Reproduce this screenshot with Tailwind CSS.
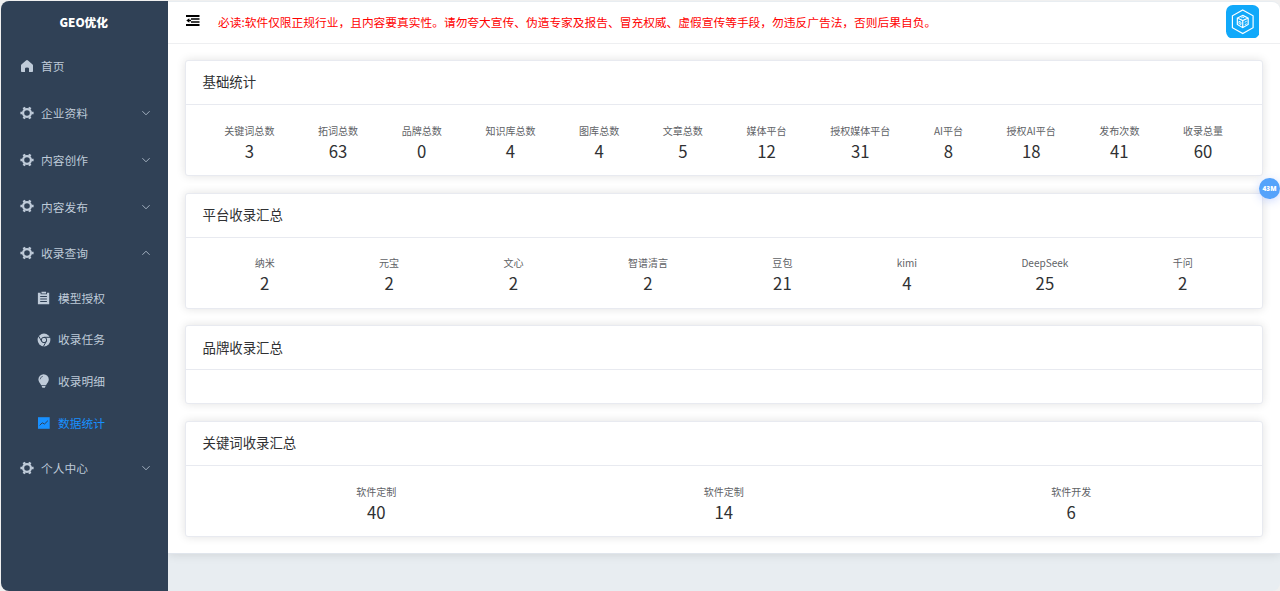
<!DOCTYPE html>
<html lang="zh-CN">
<head>
<meta charset="UTF-8" />
<meta name="viewport" content="width=device-width, initial-scale=1" />
<title>GEO优化</title>
<script src="https://cdn.jsdelivr.net/npm/@tailwindcss/browser@4"></script>
</head>
<body class="bg-[#f0f0f0] h-[591px] overflow-hidden font-['Noto_Sans_CJK_SC',sans-serif]">
  <!-- Shared icons -->
  <svg class="hidden">
    <symbol id="gear" viewBox="0 0 14 14">
      <circle cx="7" cy="7" r="3.9" fill="none" stroke="currentColor" stroke-width="2.2"/>
      <path fill="none" stroke="currentColor" stroke-width="2.6" d="M2.6 7H.4M11.4 7H13.6M4.7 3 3.7 1.3M9.3 3 10.3 1.3M4.7 11 3.7 12.7M9.3 11 10.3 12.7"/>
    </symbol>
    <symbol id="down" viewBox="0 0 10 10">
      <path fill="none" stroke="currentColor" stroke-width=".8" d="M1.4 3.2 5 6.8 8.6 3.2"/>
    </symbol>
  </svg>

  <div class="h-full pt-px pl-px flex">
    <!-- Sidebar -->
    <aside class="relative z-10 w-[166.5px] shrink-0 rounded-l-lg bg-[#304156] text-[#bfcbd9] text-[11.72px]">
      <h1 class="h-[41.5px] pr-px flex items-center justify-center text-white font-black">GEO优化</h1>
      <nav>
        <a class="h-[46.87px] pl-[19px] pr-[17px] flex items-center">
          <svg class="w-[14px] h-[14px] mr-[7px]" viewBox="0 0 14 14"><path fill="currentColor" d="M7 1Q7.5 1 8 1.5L12.6 5.6Q13 6 13 6.5V12.2Q13 13 12.2 13H9V9.6Q9 8.600 7 8.600T5 9.600V13H1.800Q1 13 1 12.200V6.500Q1 6 1.400 5.600L6 1.500Q6.500 1 7 1Z"/></svg>
          <span class="pb-px">首页</span>
        </a>
        <a class="h-[46.87px] pl-[19px] pr-[17px] flex items-center">
          <svg class="w-[14px] h-[14px] mr-[7px]"><use href="#gear"/></svg>
          <span class="pb-px">企业资料</span>
          <svg class="w-[10px] h-[10px] ml-auto"><use href="#down"/></svg>
        </a>
        <a class="h-[46.87px] pl-[19px] pr-[17px] flex items-center">
          <svg class="w-[14px] h-[14px] mr-[7px]"><use href="#gear"/></svg>
          <span>内容创作</span>
          <svg class="w-[10px] h-[10px] ml-auto"><use href="#down"/></svg>
        </a>
        <a class="h-[46.87px] pl-[19px] pr-[17px] flex items-center">
          <svg class="w-[14px] h-[14px] mr-[7px] mb-px"><use href="#gear"/></svg>
          <span>内容发布</span>
          <svg class="w-[10px] h-[10px] ml-auto"><use href="#down"/></svg>
        </a>
        <a class="h-[46.87px] pl-[19px] pr-[17px] flex items-center">
          <svg class="w-[14px] h-[14px] mr-[7px]"><use href="#gear"/></svg>
          <span class="pb-px">收录查询</span>
          <svg class="w-[10px] h-[10px] ml-auto rotate-180"><use href="#down"/></svg>
        </a>
        <a class="h-[41.85px] pl-[35.5px] flex items-center">
          <svg class="w-[14px] h-[14px] mr-[7.5px]" viewBox="0 0 14 14"><path fill="currentColor" fill-rule="evenodd" d="M.9 1.700H3.600V3.300H10V1.700H12.200V13.300H.9ZM4.500 .8H9.100V2.500H4.500ZM3.200 4.900V6H9.900V4.900ZM3.200 7.400V8.500H9.900V7.400ZM3.200 9.900V11H9.900V9.900Z"/></svg>
          <span>模型授权</span>
        </a>
        <a class="h-[41.85px] pl-[35.5px] flex items-center">
          <svg class="w-[14px] h-[14px] mr-[7.5px]" viewBox="0 0 14 14">
            <circle cx="7" cy="7" r="6.4" fill="currentColor"/>
            <circle cx="7" cy="7" r="2.7" fill="none" stroke="#304156" stroke-width="1"/>
            <path fill="none" stroke="#304156" stroke-width="1" d="M7 4.3H13M4.7 8.4 1.7 3.2M9.3 8.4 6.3 13.6"/>
          </svg>
          <span class="pb-px">收录任务</span>
        </a>
        <a class="h-[41.85px] pl-[35.5px] flex items-center">
          <svg class="w-[14px] h-[14px] mr-[7.5px]" viewBox="0 0 14 14">
            <path fill="currentColor" d="M6.600 .3a5.200 5.200 0 0 1 5.200 5.200C11.800 7.800 10 9 9 11.300H4.200C3.200 9 1.400 7.800 1.400 5.500A5.200 5.200 0 0 1 6.600 .3ZM4.600 12H8.600L7.800 13.700H5.400Z"/>
            <path fill="none" stroke="#304156" stroke-width=".7" d="M3.200 5.300A3.300 3.300 0 0 1 5.800 2.300"/>
          </svg>
          <span class="pb-px">收录明细</span>
        </a>
        <a class="h-[41.85px] pl-[35.5px] flex items-center text-[#1890ff]">
          <svg class="w-[14px] h-[14px] mr-[7.5px]" viewBox="0 0 14 14">
            <path fill="currentColor" d="M1 1.200H12.700V12.800H1Z"/>
            <path fill="none" stroke="#304156" stroke-width="1" d="M2.600 9.400 5.200 6.800 7.500 8 10.900 4.700"/>
          </svg>
          <span>数据统计</span>
        </a>
        <a class="h-[46.87px] pl-[19px] pr-[17px] flex items-center">
          <svg class="w-[14px] h-[14px] mr-[7px]"><use href="#gear"/></svg>
          <span>个人中心</span>
          <svg class="w-[10px] h-[10px] ml-auto"><use href="#down"/></svg>
        </a>
      </nav>
    </aside>

    <div class="flex-1 min-w-0 flex flex-col bg-[#e8edf1] rounded-r-lg">
      <!-- Top bar -->
      <header class="relative z-10 mt-px h-[42px] shrink-0 bg-white border-b border-[#eeeff1] rounded-tr-lg pl-[18.5px] pr-[21px] flex items-center">
        <svg class="w-[14px] h-[13px] mb-[4px] text-black" viewBox="0 0 14 13"><path fill="currentColor" d="M0 1H13.5V3H0ZM5 4.2H13.5V5.8H5ZM5 7.2H13.5V8.8H5ZM0 10H13.5V12H0ZM.3 6.500 3.300 4.300V5.800H5V7.200H3.300V8.700Z"/></svg>
        <p class="ml-[18px] mb-px text-[11.72px] text-[#ff0000] whitespace-nowrap">必读:软件仅限正规行业，且内容要真实性。请勿夸大宣传、伪造专家及报告、冒充权威、虚假宣传等手段，勿违反广告法，否则后果自负。</p>
        <svg class="w-[33.5px] h-[33.5px] ml-auto mb-[2px]" viewBox="0 0 34 34">
          <rect width="34" height="34" rx="7" fill="#11a9fa"/>
          <g fill="none" stroke="#fff" stroke-width="1.2">
            <path d="M17 5 27.5 11V23L17 29 6.5 23V11Z"/>
            <path d="M17 10.5 22.5 13.2V19.8L17 23 11.5 19.8V13.2ZM11.5 13.2 17 15.8 22.5 13.2M17 15.8V23"/>
            <path stroke-width=".9" d="M13.2 16.5V18.8L15.2 19.8V17.5ZM19 17.5 21 16.5M19 20 21 19M15.5 13 17 12.3 18.5 13"/>
          </g>
        </svg>
      </header>

      <!-- Statistics -->
      <main class="bg-white border-b border-[#e0e5ec] shadow-[0_0_10px_rgba(0,0,0,0.12)] h-[510px] px-[17px] pt-[16px] flex flex-col gap-[16.6px] text-[#303133]">
        <section class="h-[116px] shrink-0 bg-white border border-[#e8eaf0] rounded-[3px] shadow-[0_0_10px_rgba(0,0,0,0.12)]">
          <h2 class="h-[44px] px-[17px] pb-[2px] flex items-center border-b border-[#e8eaf0] text-[13.4px]">基础统计</h2>
          <div class="px-[17px] pt-[17px] flex justify-around text-center" data-row="base"></div>
        </section>
        <section class="h-[116px] shrink-0 bg-white border border-[#e8eaf0] rounded-[3px] shadow-[0_0_10px_rgba(0,0,0,0.12)]">
          <h2 class="h-[44px] px-[17px] pb-[2px] flex items-center border-b border-[#e8eaf0] text-[13.4px]">平台收录汇总</h2>
          <div class="px-[17px] pt-[16.8px] flex justify-around text-center" data-row="platform"></div>
        </section>
        <section class="h-[79px] shrink-0 bg-white border border-[#e8eaf0] rounded-[3px] shadow-[0_0_10px_rgba(0,0,0,0.12)]">
          <h2 class="h-[44px] px-[17px] pb-px flex items-center border-b border-[#e8eaf0] text-[13.4px]">品牌收录汇总</h2>
        </section>
        <section class="h-[116px] shrink-0 bg-white border border-[#e8eaf0] rounded-[3px] shadow-[0_0_10px_rgba(0,0,0,0.12)]">
          <h2 class="h-[44px] px-[17px] pb-[2px] flex items-center border-b border-[#e8eaf0] text-[13.4px]">关键词收录汇总</h2>
          <div class="px-[17px] pt-[17px] flex justify-around text-center" data-row="keyword"></div>
        </section>
      </main>
    </div>
  </div>

  <!-- Floating memory badge -->
  <div class="absolute z-20 left-[1259px] top-[178px] w-[21px] h-[21px] rounded-full bg-[#55a3fb] shadow-[0_2px_10px_rgba(85,130,251,0.3)] flex items-center justify-center text-white text-[6.5px] font-black font-['Open_Sans',sans-serif]">43M</div>

<script>
const stats = {
  base: [
    ["关键词总数", 3], ["拓词总数", 63], ["品牌总数", 0], ["知识库总数", 4],
    ["图库总数", 4], ["文章总数", 5], ["媒体平台", 12], ["授权媒体平台", 31],
    ["AI平台", 8], ["授权AI平台", 18], ["发布次数", 41], ["收录总量", 60],
  ],
  platform: [
    ["纳米", 2], ["元宝", 2], ["文心", 2], ["智谱清言", 2],
    ["豆包", 21], ["kimi", 4], ["DeepSeek", 25], ["千问", 2],
  ],
  keyword: [["软件定制", 40], ["软件定制", 14], ["软件开发", 6]],
};

document.querySelectorAll("[data-row]").forEach(row => {
  row.innerHTML = stats[row.dataset.row].map(([label, value]) => `
    <div>
      <div class="text-[10.04px] leading-[17px] text-[#606266]">${label}</div>
      <div class="text-[16.74px] leading-[24px]">${value}</div>
    </div>`).join("");
});
</script>
</body>
</html>
